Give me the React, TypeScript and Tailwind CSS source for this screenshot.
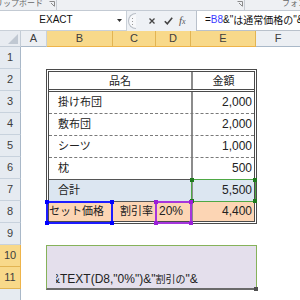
const CJK = "font-['Noto_Sans_CJK_JP',sans-serif]";

function Handle({ pos, color }: { pos: string; color: string }) {
  return <div className={`absolute w-[4px] h-[4px] ${pos} ${color}`} />;
}

export default function App() {
  const rowLabels = ["1", "2", "3", "4", "5", "6", "7", "8", "9", "10", "11"];
  return (
    <div className="relative w-[300px] h-[300px] overflow-hidden bg-white font-['Liberation_Sans','Noto_Sans_CJK_JP',sans-serif] text-[#222]">
      {/* ribbon remnant */}
      <div className="h-[11px] flex border-b border-[#c3cad3] bg-[#eef0f3] overflow-hidden">
        <div className={`w-[49px] overflow-hidden whitespace-nowrap text-[8px] leading-[8px] text-[#666] -mt-[1px] ${CJK}`}>
          <span className="ml-[-13px] inline-block">クリップボード</span>
        </div>
        <div className="w-[7px] flex items-start pt-[1px]">
          <svg width="6" height="6" viewBox="0 0 6 6">
            <path d="M0.5 0.5 H5.5 V5.5" fill="none" stroke="#8a8a8a" strokeWidth="1" />
            <path d="M2 2 L5 5" stroke="#8a8a8a" strokeWidth="1" />
          </svg>
        </div>
        <div className="w-[1px] bg-[#c7ccd2]" />
        <div className="w-[180px]" />
        <div className="w-[7px] flex items-start pt-[1px]">
          <svg width="6" height="6" viewBox="0 0 6 6">
            <path d="M0.5 0.5 H5.5 V5.5" fill="none" stroke="#8a8a8a" strokeWidth="1" />
            <path d="M2 2 L5 5" stroke="#8a8a8a" strokeWidth="1" />
          </svg>
        </div>
        <div className="w-[1px] bg-[#c7ccd2]" />
        <div className="w-[37px]" />
        <div className={`flex-1 overflow-hidden whitespace-nowrap text-[8px] leading-[8px] text-[#666] -mt-[1px] ${CJK}`}>フォント</div>
      </div>

      {/* formula bar */}
      <div className="h-[20px] flex bg-[#eef1f5]">
        <div className="w-[127px] flex bg-white border-r border-b border-[#c9d0d8]">
          <div className="w-[112px] flex items-center justify-center text-[10px] leading-none text-[#111] pb-[1px]">EXACT</div>
          <div className="flex-1 flex items-center justify-center pb-[1px]">
            <svg width="5" height="3" viewBox="0 0 5 3">
              <path d="M0 0 H5 L2.5 3 Z" fill="#333" />
            </svg>
          </div>
        </div>
        <div className="w-[69px] flex items-center">
          <div className="ml-[1px] w-[8px] h-[16px] rounded-l-full border border-r-0 border-[#b8bec6] bg-[#f7f8fa] flex flex-col items-center justify-center gap-[2px]">
            <div className="w-[1px] h-[1px] bg-[#999]" />
            <div className="w-[1px] h-[1px] bg-[#999]" />
            <div className="w-[1px] h-[1px] bg-[#999]" />
          </div>
          <div className="ml-[12px] w-[7px] flex justify-center">
            <svg width="6" height="6" viewBox="0 0 6 6">
              <path d="M0.5 0.5 L5.5 5.5 M5.5 0.5 L0.5 5.5" stroke="#444" strokeWidth="1.3" />
            </svg>
          </div>
          <div className="ml-[9px] w-[9px] flex justify-center">
            <svg width="9" height="8" viewBox="0 0 9 8">
              <path d="M0.8 4.2 L3.3 6.8 L8.2 0.8" fill="none" stroke="#444" strokeWidth="1.6" />
            </svg>
          </div>
          <div className="ml-[6px] text-[11px] leading-none italic text-[#555] font-['Liberation_Serif',serif] pb-[2px]">
            f<span className="text-[8px]">x</span>
          </div>
        </div>
        <div className="flex-1 bg-white border-l border-b border-[#b9c1cb] flex items-center pl-[8px] whitespace-nowrap overflow-hidden text-[10px] leading-none text-[#111] pb-[1px]">
          =<span className="text-[#3a3aff]">B8</span>&amp;"<span className={`${CJK} text-[10px]`}>は通常価格の</span>"&amp;
        </div>
      </div>

      {/* column headers */}
      <div className="h-[16px] flex text-[11px] leading-none text-[#3d3d3d]">
        <div className="relative w-[21px] bg-[#e8ecf1] border-r border-b border-[#c3ccd6]">
          <svg className="absolute right-[2px] bottom-[2px]" width="10" height="10" viewBox="0 0 10 10">
            <path d="M10 0 V10 H0 Z" fill="#c0c8d2" />
          </svg>
        </div>
        <div className="w-[26px] flex items-center justify-center bg-[#eceff3] border-r border-[#c9d1db] border-b border-b-[#a9b8c8]">A</div>
        <div className="w-[66px] flex items-center justify-center bg-[#f8d98a] border-r border-[#e2b452] border-b border-b-[#eeb44a]">B</div>
        <div className="w-[43px] flex items-center justify-center bg-[#f8d98a] border-r border-[#e2b452] border-b border-b-[#eeb44a]">C</div>
        <div className="w-[35px] flex items-center justify-center bg-[#f8d98a] border-r border-[#e2b452] border-b border-b-[#eeb44a]">D</div>
        <div className="w-[65px] flex items-center justify-center bg-[#f8d98a] border-r border-[#e2b452] border-b border-b-[#eeb44a]">E</div>
        <div className="flex-1 flex items-center justify-center bg-[#eceff3] border-b border-[#a9b8c8]">F</div>
      </div>

      {/* sheet */}
      <div className="flex">
        <div className="w-[21px] flex flex-col text-[11px] leading-none text-[#3d3d3d]">
          {rowLabels.map((l) => {
            const sel = l === "10" || l === "11";
            return (
              <div
                key={l}
                className={
                  sel
                    ? "h-[22px] flex items-center justify-center bg-[#f8d98a] border-b border-[#e2b452] border-r border-r-[#eeb44a]"
                    : "h-[22px] flex items-center justify-center bg-[#e6ebf1] border-b border-[#c8d2dd] border-r border-r-[#a9b8c8]"
                }
              >
                {l}
              </div>
            );
          })}
          <div className="h-[22px] bg-[#e6ebf1] border-r border-[#a9b8c8]" />
        </div>

        <div className="flex-1 flex flex-col pl-[25px]">
          <div className="h-[22px]" />
          {/* table */}
          <div className="w-[211px] h-[155px] flex flex-col border-[3px] border-double border-[#4a4a4a]">
            <div className="h-[20px] flex border-b-[3px] border-double border-[#4a4a4a]">
              <div className={`w-[142px] flex items-center justify-center text-[11px] leading-none pb-[1px] ${CJK}`}>品名</div>
              <div className={`flex-1 flex items-center justify-center border-l-2 border-[#8c8c8c] text-[11px] leading-none pb-[1px] ${CJK}`}>金額</div>
            </div>
            {[
              ["掛け布団", "2,000", "border-dashed border-[#7a7a7a]"],
              ["敷布団", "2,000", "border-dashed border-[#7a7a7a]"],
              ["シーツ", "1,000", "border-dashed border-[#7a7a7a]"],
              ["枕", "500", "border-solid border-[#555555]"],
            ].map(([n, v, b]) => (
              <div key={n} className={`h-[22px] flex border-b ${b}`}>
                <div className={`w-[142px] flex items-center pl-[9px] text-[11px] leading-none pb-[2px] ${CJK}`}>{n}</div>
                <div className="flex-1 flex items-center justify-end pr-[2px] border-l-2 border-[#8c8c8c] text-[12px] leading-none pb-[2px]">{v}</div>
              </div>
            ))}
            <div className="h-[22px] flex border-b border-[#555555] bg-[#dce6f1]">
              <div className={`w-[142px] flex items-center pl-[9px] text-[11px] leading-none pb-[2px] ${CJK}`}>合計</div>
              <div className="flex-1 flex items-center justify-end pr-[2px] border-l-2 border-[#8c8c8c] text-[12px] leading-none pb-[2px]">5,500</div>
            </div>
            <div className="flex-1 flex bg-[#fcd5b4]">
              <div className={`w-[64px] flex items-center whitespace-nowrap text-[11px] leading-none pb-[2px] ${CJK}`}>セット価格</div>
              <div className={`w-[43px] flex items-center pl-[7px] whitespace-nowrap text-[11px] leading-none pb-[2px] ${CJK}`}>割引率</div>
              <div className="w-[35px] flex items-center pl-[3px] text-[12px] leading-none pb-[2px]">20%</div>
              <div className="flex-1 flex items-center justify-end pr-[2px] border-l-2 border-[#8c8c8c] text-[12px] leading-none pb-[2px]">4,400</div>
            </div>
          </div>
          <div className="h-[21px]" />
          {/* text box */}
          <div className="relative w-[211px] h-[45px] bg-[#e4dfec] border border-[#86b25a] border-b-2 border-b-[#6a6a6a]">
            <div className="ml-[9px] mt-[25px] overflow-hidden whitespace-nowrap text-[12px] leading-[16px] text-[#222]">
              <span className="inline-block ml-[-4px]">
                &amp;TEXT(D8,"0%")&amp;"<span className={`${CJK} text-[10px]`}>割引の</span>"&amp;
              </span>
            </div>
            <div className="absolute -right-[2px] -bottom-[3px] w-[4px] h-[4px] bg-[#505050]" />
          </div>
        </div>
      </div>

      {/* range finder overlays */}
      <div className="absolute left-[191px] top-[179px] w-[65px] h-[23px] border border-[#4fa845]">
        <Handle pos="-left-[2px] -top-[2px]" color="bg-[#1f7a1f]" />
        <Handle pos="-right-[2px] -top-[2px]" color="bg-[#1f7a1f]" />
        <Handle pos="-left-[2px] -bottom-[2px]" color="bg-[#1f7a1f]" />
        <Handle pos="-right-[2px] -bottom-[2px]" color="bg-[#1f7a1f]" />
      </div>
      <div className="absolute left-[46px] top-[201px] w-[67px] h-[23px] border-2 border-[#1c1cff]">
        <Handle pos="-left-[3px] -top-[3px]" color="bg-[#0000ff]" />
        <Handle pos="-right-[3px] -top-[3px]" color="bg-[#0000ff]" />
        <Handle pos="-left-[3px] -bottom-[3px]" color="bg-[#0000ff]" />
        <Handle pos="-right-[3px] -bottom-[3px]" color="bg-[#0000ff]" />
      </div>
      <div className="absolute left-[155px] top-[201px] w-[37px] h-[23px] border-2 border-[#a535dc]">
        <Handle pos="-left-[3px] -top-[3px]" color="bg-[#9b1fd6]" />
        <Handle pos="-right-[3px] -top-[3px]" color="bg-[#9b1fd6]" />
        <Handle pos="-left-[3px] -bottom-[3px]" color="bg-[#9b1fd6]" />
        <Handle pos="-right-[3px] -bottom-[3px]" color="bg-[#9b1fd6]" />
      </div>
    </div>
  );
}
